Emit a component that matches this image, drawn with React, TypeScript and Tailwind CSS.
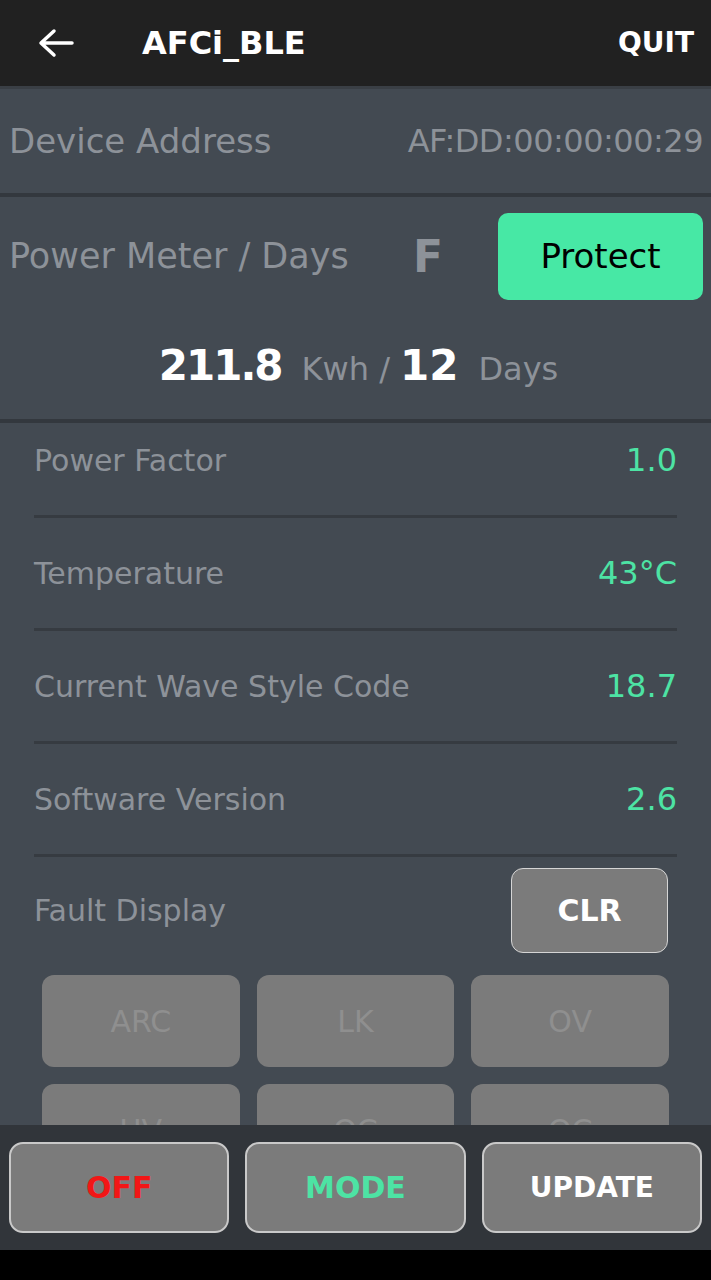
import React from "react";

const font = { fontFamily: '"DejaVu Sans", sans-serif' };

function InfoRow({ label, value }: { label: string; value: string }) {
  return (
    <div className="h-[113px] flex items-center justify-between border-b-[3px] border-[#363b41]">
      <span className="text-[30px] text-[#8d9299]">{label}</span>
      <span className="text-[32px] text-[#4de3a4]">{value}</span>
    </div>
  );
}

function FaultCell({ label }: { label: string }) {
  return (
    <div className="h-[92px] rounded-[12px] bg-[#7b7b7b] flex items-center justify-center text-[30px] text-[#8f8f8f]">
      {label}
    </div>
  );
}

export default function App() {
  return (
    <div className="w-[711px] h-[1280px] flex flex-col bg-black overflow-hidden" style={font}>
      {/* title bar */}
      <div className="h-[86px] bg-[#212121] flex items-center px-[38px] shrink-0">
        <svg width="36" height="30" viewBox="0 0 36 30" className="mr-[68px]">
          <path d="M34 15H4M16 3L3 15l13 12" fill="none" stroke="white" strokeWidth="3.5" strokeLinecap="round" strokeLinejoin="round" />
        </svg>
        <span className="text-[32px] text-white font-bold">AFCi_BLE</span>
        <span className="ml-auto text-[28px] text-white font-bold mr-[-21px]">QUIT</span>
      </div>
      <div className="h-[3px] bg-[#3a3f45] shrink-0" />

      <div className="flex-1 bg-[#434a52] flex flex-col overflow-hidden">
        {/* device address */}
        <div className="h-[108px] flex items-center justify-between pl-[9px] pr-[8px] border-b-[4px] border-[#33383e] shrink-0">
          <span className="text-[34px] text-[#8d9299]">Device Address</span>
          <span className="text-[32px] text-[#8d9299] tracking-[-0.5px]">AF:DD:00:00:00:29</span>
        </div>

        {/* power meter */}
        <div className="h-[226px] border-b-[4px] border-[#33383e] shrink-0 flex flex-col">
          <div className="flex items-center pl-[9px] pr-[8px] pt-[16px]">
            <span className="w-[404px] text-[35px] text-[#8d9299] whitespace-nowrap">Power Meter / Days</span>
            <span className="text-[44px] text-[#8d9299] font-bold">F</span>
            <div className="ml-auto w-[205px] h-[87px] rounded-[10px] bg-[#47e8a5] flex items-center justify-center text-[34px] text-black">
              Protect
            </div>
          </div>
          <div className="flex items-baseline justify-center mt-[34px] gap-[20px] pl-[6px]">
            <span className="text-[42px] text-white font-bold tracking-[-2px]">211.8</span>
            <span className="text-[32px] text-[#8d9299]">Kwh /</span>
            <span className="text-[42px] text-white font-bold -ml-[10px]">12</span>
            <span className="text-[32px] text-[#8d9299]">Days</span>
          </div>
        </div>

        {/* scrolling list */}
        <div className="flex-1 overflow-hidden px-[34px] -mt-[18px]">
          <InfoRow label="Power Factor" value="1.0" />
          <InfoRow label="Temperature" value="43°C" />
          <InfoRow label="Current Wave Style Code" value="18.7" />
          <InfoRow label="Software Version" value="2.6" />
          <div className="flex items-center justify-between pt-[11px] pr-[9px]">
            <span className="text-[30px] text-[#8d9299]">Fault Display</span>
            <div className="w-[157px] h-[85px] rounded-[12px] bg-[#7b7b7b] border border-[#d5d5d5] flex items-center justify-center text-[30px] text-white font-bold">
              CLR
            </div>
          </div>
          <div className="grid grid-cols-3 gap-x-[17px] gap-y-[17px] px-[8px] mt-[22px]">
            {["ARC", "LK", "OV", "UV", "OC", "OC"].map((l, i) => (
              <FaultCell key={i} label={l} />
            ))}
          </div>
        </div>
      </div>

      {/* bottom buttons */}
      <div className="h-[125px] bg-[#31353a] shrink-0 grid grid-cols-3 gap-[16px] px-[9px] py-[17px]">
        <div className="rounded-[14px] bg-[#7b7b7b] border-2 border-[#c9c9c9] flex items-center justify-center text-[30px] text-[#f21616] font-bold">OFF</div>
        <div className="rounded-[14px] bg-[#7b7b7b] border-2 border-[#c9c9c9] flex items-center justify-center text-[30px] text-[#4de3a4] font-bold">MODE</div>
        <div className="rounded-[14px] bg-[#7b7b7b] border-2 border-[#c9c9c9] flex items-center justify-center text-[28px] text-white font-bold">UPDATE</div>
      </div>
      <div className="h-[30px] bg-black shrink-0" />
    </div>
  );
}
